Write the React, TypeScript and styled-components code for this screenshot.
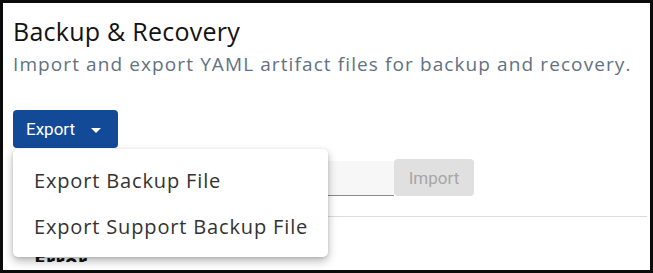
import React from "react";
import styled, { createGlobalStyle } from "styled-components";

const Global = createGlobalStyle`
  html, body { margin: 0; padding: 0; background: #ffffff; }
  * { box-sizing: border-box; }
`;

const Page = styled.div`
  position: relative;
  width: 653px;
  height: 273px;
  border: 3px solid #0b0b0b;
  padding: 12px 3px 0 10px;
  overflow: hidden;
  background: #ffffff;
  font-family: "Open Sans", "DejaVu Sans", sans-serif;
`;

const Content = styled.div`
  height: 247px;
  overflow: hidden;
`;

const Title = styled.h1`
  margin: 0;
  font-size: 25px;
  line-height: 32px;
  font-weight: 400;
  letter-spacing: 0.25px;
  color: #121212;
`;

const Subtitle = styled.p`
  margin: 4px 0 0 0;
  font-size: 19px;
  line-height: 26px;
  letter-spacing: 1.1px;
  white-space: nowrap;
  color: #627184;
`;

const ExportButton = styled.button`
  margin-top: 33px;
  display: flex;
  align-items: center;
  gap: 16px;
  height: 38px;
  padding: 0 17px 0 13px;
  border: none;
  border-radius: 4px;
  background: #134a98;
  color: #ffffff;
  font-family: Roboto, "Liberation Sans", sans-serif;
  font-size: 17px;
`;

const Caret = styled.span`
  width: 0;
  height: 0;
  border-left: 5px solid transparent;
  border-right: 5px solid transparent;
  border-top: 5px solid #ffffff;
  margin-top: 2px;
`;

const ImportRow = styled.div`
  display: flex;
  align-items: flex-end;
  margin-top: 11px;
`;

const FileInput = styled.div`
  width: 381px;
  height: 35px;
  background: #f7f7f7;
  border-bottom: 1px solid #8a8a8a;
`;

const ImportButton = styled.button`
  width: 80px;
  height: 37px;
  border: none;
  border-radius: 4px;
  background: #e0e0e0;
  color: #a6a6a6;
  font-family: Roboto, "Liberation Sans", sans-serif;
  font-size: 17px;
`;

const Divider = styled.hr`
  margin: 20px 0 0 0;
  border: none;
  border-top: 1px solid #dcdcdc;
`;

const ErrorHeading = styled.h2`
  margin: 30px 0 0 21px;
  font-size: 21px;
  line-height: 30px;
  font-weight: 700;
  color: #111111;
`;

const Menu = styled.ul`
  position: absolute;
  top: 146px;
  left: 10px;
  width: 315px;
  margin: 0;
  padding: 8px 0;
  list-style: none;
  background: #ffffff;
  border-radius: 5px;
  box-shadow: 0 4px 10px rgba(0, 0, 0, 0.28), 0 1px 3px rgba(0, 0, 0, 0.12);
`;

const MenuItem = styled.li`
  padding: 0 21px;
  height: 46px;
  display: flex;
  align-items: center;
  font-size: 20px;
  letter-spacing: 0.85px;
  white-space: nowrap;
  color: #333333;
`;

export default function App() {
  return (
    <>
      <Global />
      <Page>
        <Content>
          <Title>Backup &amp; Recovery</Title>
          <Subtitle>Import and export YAML artifact files for backup and recovery.</Subtitle>
          <ExportButton>
            Export
            <Caret />
          </ExportButton>
          <ImportRow>
            <FileInput />
            <ImportButton>Import</ImportButton>
          </ImportRow>
          <Divider />
          <ErrorHeading>Error</ErrorHeading>
        </Content>
        <Menu>
          <MenuItem>Export Backup File</MenuItem>
          <MenuItem>Export Support Backup File</MenuItem>
        </Menu>
      </Page>
    </>
  );
}
